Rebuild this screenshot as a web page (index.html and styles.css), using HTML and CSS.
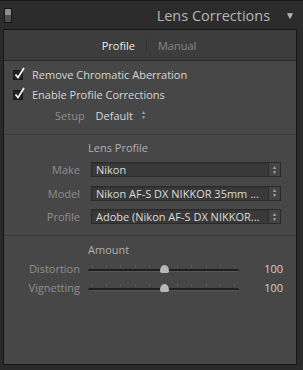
FILE: index.html
```html
<!DOCTYPE html>
<html lang="en">
<head>
  <meta charset="UTF-8" />
  <title>Lens Corrections</title>
  <link rel="stylesheet" href="styles.css">
</head>
<body>
  <header class="panel-head">
    <span class="solo-switch"></span>
    <h1>Lens Corrections</h1>
    <span class="collapse">&#9660;</span>
  </header>

  <div class="panel">
    <nav class="tabs">
      <span class="tab active">Profile</span>
      <span class="tab-sep"></span>
      <span class="tab">Manual</span>
    </nav>

    <section class="group checks">
      <label class="check">
        <svg class="box" width="14" height="14" viewBox="0 0 14 14">
          <rect x="0.5" y="3.5" width="9" height="9" fill="#232323" stroke="#1a1a1a"/>
          <path d="M2.5 7.5 L5 10.5 L11 1" fill="none" stroke="#f2f2f2" stroke-width="1.8"/>
        </svg>
        Remove Chromatic Aberration
      </label>
      <label class="check">
        <svg class="box" width="14" height="14" viewBox="0 0 14 14">
          <rect x="0.5" y="3.5" width="9" height="9" fill="#232323" stroke="#1a1a1a"/>
          <path d="M2.5 7.5 L5 10.5 L11 1" fill="none" stroke="#f2f2f2" stroke-width="1.8"/>
        </svg>
        Enable Profile Corrections
      </label>
      <div class="setup">
        <span class="muted">Setup</span>
        <span class="setup-value">Default</span>
        <span class="updown">&#9650;<br>&#9660;</span>
      </div>
    </section>

    <section class="group lens">
      <h2>Lens Profile</h2>
      <div class="field">
        <span class="muted">Make</span>
        <div class="select"><span>Nikon</span><i class="updown">&#9650;<br>&#9660;</i></div>
      </div>
      <div class="field">
        <span class="muted">Model</span>
        <div class="select"><span>Nikon AF-S DX NIKKOR 35mm ...</span><i class="updown">&#9650;<br>&#9660;</i></div>
      </div>
      <div class="field">
        <span class="muted">Profile</span>
        <div class="select"><span>Adobe (Nikon AF-S DX NIKKOR...</span><i class="updown">&#9650;<br>&#9660;</i></div>
      </div>
    </section>

    <section class="group amount">
      <h2>Amount</h2>
      <div class="slider-row">
        <span class="muted">Distortion</span>
        <div class="slider"><span class="ticks"></span><span class="track"></span><span class="thumb"></span></div>
        <span class="value">100</span>
      </div>
      <div class="slider-row">
        <span class="muted">Vignetting</span>
        <div class="slider"><span class="ticks"></span><span class="track"></span><span class="thumb"></span></div>
        <span class="value">100</span>
      </div>
    </section>
  </div>
</body>
</html>
```

FILE: styles.css
```css
* { margin: 0; padding: 0; box-sizing: border-box; }
body {
  width: 303px;
  height: 370px;
  background: #2a2a2a;
  font-family: 'Open Sans', sans-serif;
  font-size: 11px;
  color: #d2d2d2;
  border-top: 1px solid #1a1a1a;
}

/* Panel header */
.panel-head {
  height: 28px;
  display: flex;
  align-items: center;
  padding: 0 8px 0 4px;
  background: #2c2c2c;
}
.solo-switch {
  width: 8px;
  height: 15px;
  border: 1px solid #151515;
  background: linear-gradient(#8c8c8c 0 50%, #505050 50% 100%);
}
.panel-head h1 {
  flex: 1;
  text-align: right;
  font-size: 14.5px;
  font-weight: 400;
  color: #b4b4b4;
  margin-right: 15px;
}
.collapse { font-size: 10px; color: #b4b4b4; }

/* Panel body */
.panel {
  margin: 0 6px 0 3px;
  height: 336px;
  background: #474747;
  border: 1px solid #161616;
}
.tabs {
  height: 31px;
  display: flex;
  align-items: center;
  justify-content: center;
  gap: 11px;
  background: #3d3d3d;
  border-bottom: 1px solid #2a2a2a;
  padding-right: 2px;
}
.tab { color: #888; }
.tab.active { color: #ececec; }
.tab-sep { width: 1px; height: 12px; background: #2e2e2e; }

.group { border-bottom: 1px solid #3a3a3a; }
.muted { color: #8f8f8f; }
h2 {
  font-size: 11px;
  font-weight: 400;
  color: #b0b0b0;
  padding-left: 84px;
  height: 18px;
  line-height: 18px;
}

/* Checkboxes */
.checks { padding: 3px 0 8px; }
.check {
  display: flex;
  align-items: center;
  gap: 5px;
  height: 20px;
  padding-left: 9px;
  color: #d6d6d6;
}
.setup {
  display: flex;
  align-items: center;
  height: 22px;
  padding-left: 51px;
}
.setup-value { margin-left: 11px; color: #d6d6d6; }
.updown {
  display: inline-block;
  font-size: 5px;
  line-height: 5px;
  font-style: normal;
  color: #a8a8a8;
  text-align: center;
}
.setup .updown { margin-left: 8px; }

/* Lens profile selects */
.lens { padding: 4px 0 11px; }
.field {
  display: grid;
  grid-template-columns: 76px 190px;
  column-gap: 11px;
  align-items: center;
  height: 15px;
  line-height: 15px;
  margin-top: 5px;
}
.field + .field { margin-top: 8.5px; }
.field .muted { text-align: right; }
.select {
  height: 15px;
  display: flex;
  align-items: center;
  background: #393939;
  border: 1px solid #2b2b2b;
  box-shadow: inset 0 1px 0 #333;
}
.select span {
  flex: 1;
  min-width: 0;
  padding-left: 4px;
  color: #dcdcdc;
  white-space: nowrap;
  overflow: hidden;
}
.select .updown {
  width: 12px;
  align-self: stretch;
  display: flex;
  flex-direction: column;
  justify-content: center;
  background: #444;
  border-left: 1px solid #2b2b2b;
}

/* Sliders */
.amount { padding-top: 5px; border-bottom: 0; }
.slider-row {
  display: grid;
  grid-template-columns: 76px 151px 1fr;
  column-gap: 8px;
  align-items: center;
  height: 19px;
  padding-right: 13px;
}
.slider-row .muted { text-align: right; }
.slider { position: relative; height: 12px; }
.ticks {
  position: absolute;
  left: 4px;
  right: 4px;
  top: 2px;
  height: 3px;
  background: repeating-linear-gradient(90deg, #5a5a5a 0 1px, transparent 1px 14.2px);
}
.track {
  position: absolute;
  left: 0;
  right: 0;
  top: 6px;
  height: 3px;
  border-radius: 2px;
  background: #1f1f1f;
  border-bottom: 1px solid #555;
}
.thumb {
  position: absolute;
  left: 72px;
  top: 2px;
  width: 9px;
  height: 8px;
  background: #b8b8b8;
  border-radius: 50% 50% 2px 2px / 80% 80% 2px 2px;
}
.value { text-align: right; color: #d0d0d0; }
```
